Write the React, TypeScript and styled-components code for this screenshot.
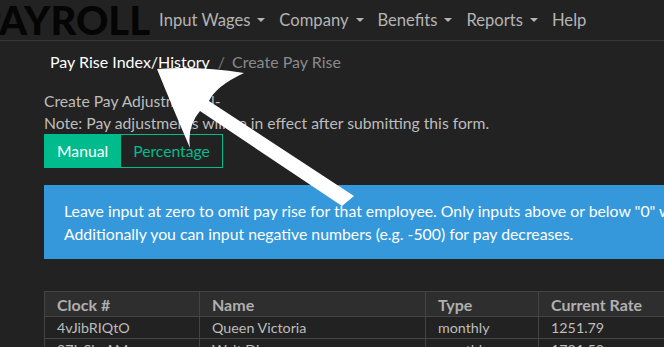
import React from 'react'
import styled, { createGlobalStyle } from 'styled-components'

const GlobalStyle = createGlobalStyle`
  html, body {
    margin: 0;
    padding: 0;
    background: #222222;
    overflow: hidden;
  }
  body {
    font-family: Lato, "Open Sans", "Liberation Sans", sans-serif;
    font-size: 15px;
    color: #bdbdbd;
  }
`

const Page = styled.div`
  position: relative;
  width: 664px;
  height: 347px;
  overflow: hidden;
`

const Navbar = styled.nav`
  display: flex;
  align-items: center;
  height: 40px;
  border-bottom: 1px solid #383838;
  white-space: nowrap;
`

const Brand = styled.div`
  font-size: 40px;
  font-weight: 900;
  color: #050505;
  margin-left: -24px;
  margin-right: 2px;
  line-height: 40px;
`

const NavList = styled.ul`
  display: flex;
  list-style: none;
  margin: 0;
  padding: 0;
`

const NavItem = styled.li`
  display: flex;
  align-items: center;
  padding: 0 7px;
  font-size: 16.6px;
  color: #b4b4b4;
`

const Caret = styled.span`
  display: inline-block;
  margin-left: 7px;
  width: 0;
  height: 0;
  border-left: 4px solid transparent;
  border-right: 4px solid transparent;
  border-top: 4px solid #b4b4b4;
`

const Content = styled.main`
  padding-left: 44px;
  width: 900px;
`

const Breadcrumb = styled.ol`
  display: flex;
  list-style: none;
  margin: 10px 0 0;
  padding: 0 6px;
  font-size: 16px;
  line-height: 22px;
`

const Crumb = styled.li<{ $active?: boolean }>`
  color: ${p => (p.$active ? '#8a8a8a' : '#ffffff')};
  &:not(:first-child)::before {
    content: '/';
    color: #777;
    padding: 0 7px 0 8px;
  }
`

const Lead = styled.p`
  margin: 17px 0 0;
  font-size: 15.7px;
  line-height: 22px;
  color: #bdbdbd;
`

const ButtonGroup = styled.div`
  display: flex;
`

const ToggleButton = styled.button<{ $active?: boolean }>`
  font-family: inherit;
  font-size: 15.7px;
  height: 34px;
  padding: 0 12px;
  border: 1px solid #00bc8c;
  background: ${p => (p.$active ? '#00bc8c' : 'transparent')};
  color: ${p => (p.$active ? '#ffffff' : '#00bc8c')};
  & + & {
    margin-left: -1px;
  }
`

const Alert = styled.div`
  margin-top: 17px;
  background: #3498db;
  color: #ffffff;
  padding: 14px 20px;
  font-size: 15.8px;
  line-height: 23px;
  white-space: nowrap;
`

const Table = styled.table`
  margin-top: 32px;
  border-collapse: collapse;
  font-size: 14.3px;
`

const Th = styled.th<{ $w: number }>`
  width: ${p => p.$w}px;
  box-sizing: border-box;
  text-align: left;
  font-weight: 700;
  color: #b0b0b0;
  background: #2e2e2e;
  border: 1px solid #444;
  padding: 0 12px;
  height: 25px;
  font-size: 16px;
`

const Td = styled.td`
  border: 1px solid #444;
  padding: 0 12px;
  height: 21px;
  color: #bdbdbd;
  white-space: nowrap;
`

const Arrow = styled.svg`
  position: absolute;
  left: 0;
  top: 0;
  pointer-events: none;
`

const navItems = [
  { label: 'Input Wages', dropdown: true },
  { label: 'Company', dropdown: true },
  { label: 'Benefits', dropdown: true },
  { label: 'Reports', dropdown: true },
  { label: 'Help', dropdown: false },
]

const rows = [
  ['4vJibRIQtO', 'Queen Victoria', 'monthly', '1251.79'],
  ['97IsSbsAMp', 'Walt Disney', 'monthly', '1701.50'],
]

export default function App() {
  return (
    <Page>
      <GlobalStyle />
      <Navbar>
        <Brand>PAYROLL</Brand>
        <NavList>
          {navItems.map(item => (
            <NavItem key={item.label}>
              {item.label}
              {item.dropdown && <Caret />}
            </NavItem>
          ))}
        </NavList>
      </Navbar>

      <Content>
        <Breadcrumb>
          <Crumb>Pay Rise Index/History</Crumb>
          <Crumb $active>Create Pay Rise</Crumb>
        </Breadcrumb>

        <Lead>
          Create Pay Adjustment -l-
          <br />
          Note: Pay adjustments will be in effect after submitting this form.
        </Lead>

        <ButtonGroup>
          <ToggleButton $active>Manual</ToggleButton>
          <ToggleButton>Percentage</ToggleButton>
        </ButtonGroup>

        <Alert>
          Leave input at zero to omit pay rise for that employee. Only inputs above or below "0" will be applied.
          <br />
          Additionally you can input negative numbers (e.g. -500) for pay decreases.
        </Alert>

        <Table>
          <thead>
            <tr>
              <Th $w={155}>Clock #</Th>
              <Th $w={226}>Name</Th>
              <Th $w={113}>Type</Th>
              <Th $w={160}>Current Rate</Th>
              <Th $w={160}>New Rate</Th>
            </tr>
          </thead>
          <tbody>
            {rows.map(r => (
              <tr key={r[0]}>
                {r.map((c, i) => (
                  <Td key={i}>{c}</Td>
                ))}
                <Td />
              </tr>
            ))}
          </tbody>
        </Table>
      </Content>

      <Arrow width="664" height="347" viewBox="0 0 664 347">
        <path
          d="M157,69 Q200,66 244,73 Q216,86 209,101 L354,196 L342,206 L200,111 Q187,126 190,148 Q172,106 157,69 Z"
          fill="#ffffff"
        />
      </Arrow>
    </Page>
  )
}
